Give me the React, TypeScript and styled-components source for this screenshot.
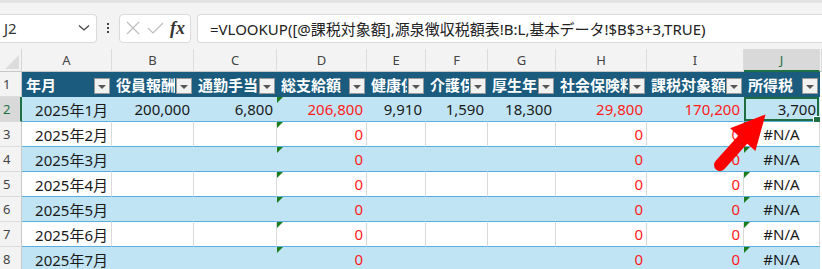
import * as React from 'react';
import styled, { createGlobalStyle, css } from 'styled-components';

const GlobalStyle = createGlobalStyle`
  html, body {
    margin: 0;
    padding: 0;
    background: #ffffff;
  }
  body {
    font-family: 'Noto Sans', 'Noto Sans CJK JP', sans-serif;
  }
  * {
    box-sizing: border-box;
  }
`;

const Page = styled.div`
  position: relative;
  width: 822px;
  height: 269px;
  overflow: hidden;
`;

const FormulaBar = styled.div`
  display: flex;
  align-items: center;
  height: 49px;
  padding: 12px 0 8px 0;
  background: #f3f3f3;
  border-top: 3px solid #e2e2e2;
`;

const Box = styled.div`
  display: flex;
  align-items: center;
  height: 29px;
  background: #ffffff;
  border: 1px solid #dadada;
  border-radius: 4px;
`;

const NameBox = styled(Box)`
  width: 97px;
  border-left: none;
  border-radius: 0 4px 4px 0;
  padding: 0 6px 0 4px;
  justify-content: space-between;
  font-size: 15px;
  color: #333;
`;

const Dots = styled.div`
  width: 22px;
  display: flex;
  flex-direction: column;
  align-items: center;
  gap: 2px;
  span {
    width: 2px;
    height: 2px;
    background: #444;
  }
`;

const FxBox = styled(Box)`
  width: 72px;
  padding: 0 5px 0 6px;
  justify-content: space-between;
`;

const FxText = styled.span`
  font-family: 'Liberation Serif', serif;
  font-style: italic;
  font-weight: bold;
  font-size: 18px;
  color: #333;
`;

const FormulaBox = styled(Box)`
  flex: 1;
  margin-left: 6px;
  border-right: none;
  border-radius: 4px 0 0 4px;
  padding-left: 12px;
  font-size: 15px;
  color: #222;
  white-space: nowrap;
`;

const Sheet = styled.div`
  display: grid;
  grid-template-columns: 22px 90px 82px 83px 90px 59px 62px 68px 91px 97px 76px 2px;
  grid-template-rows: 23px repeat(8, 25px);
  font-family: 'Noto Sans', 'Noto Sans CJK JP', sans-serif;
`;

const Corner = styled.div`
  background: #f3f3f3;
  border-right: 1px solid #d6d6d6;
  border-bottom: 1px solid #c8c8c8;
  position: relative;
  &::after {
    content: '';
    position: absolute;
    right: 2px;
    bottom: 2px;
    border-style: solid;
    border-width: 0 0 14px 14px;
    border-color: transparent transparent #dcdcdc transparent;
  }
`;

const ColHead = styled.div<{ $sel?: boolean }>`
  display: flex;
  align-items: center;
  justify-content: center;
  font-size: 13px;
  color: #444;
  background: #f3f3f3;
  border-right: 1px solid #dcdcdc;
  border-bottom: 1px solid #c8c8c8;
  ${(p) =>
    p.$sel &&
    css`
      background: #d9d9d9;
      color: #1e7145;
      border-bottom: 2px solid #1e7145;
    `}
`;

const RowHead = styled.div<{ $sel?: boolean }>`
  display: flex;
  align-items: center;
  padding-left: 3px;
  font-size: 13px;
  color: #444;
  background: #f3f3f3;
  border-right: 1px solid #c8c8c8;
  border-bottom: 1px solid #dcdcdc;
  ${(p) =>
    p.$sel &&
    css`
      background: #d9d9d9;
      color: #1e7145;
      border-right: 2px solid #1e7145;
    `}
`;

const HeadCell = styled.div`
  display: flex;
  align-items: center;
  gap: 1px;
  padding: 0 2px 0 4px;
  background: #1b5b7d;
  color: #ffffff;
  font-family: 'Noto Sans CJK JP', sans-serif;
  font-weight: bold;
  font-size: 15px;
`;

const HeadText = styled.span`
  flex: 1;
  min-width: 0;
  overflow: hidden;
  white-space: nowrap;
`;

const FilterButton = styled.span`
  position: relative;
  flex: none;
  width: 16px;
  height: 16px;
  margin-top: 2px;
  background: #f2f2f2;
  border: 1px solid #9a9a9a;
  &::after {
    content: '';
    position: absolute;
    left: 3px;
    top: 6px;
    border-style: solid;
    border-width: 4px 4px 0 4px;
    border-color: #555 transparent transparent transparent;
  }
`;

const Filler = styled.div`
  background: #ffffff;
`;

const Cell = styled.div<{ $band: boolean; $red?: boolean; $align: 'right' | 'center'; $tri?: boolean; $sel?: boolean }>`
  position: relative;
  display: flex;
  align-items: center;
  justify-content: ${(p) => (p.$align === 'right' ? 'flex-end' : 'center')};
  padding: 0 3px 0 3px;
  font-size: 15px;
  white-space: nowrap;
  color: ${(p) => (p.$red ? '#ff1a1a' : '#1a1a1a')};
  background: ${(p) => (p.$band ? '#c0e4f4' : '#ffffff')};
  border-bottom: 1px solid #5aaede;
  border-right: 1px solid ${(p) => (p.$band ? '#c0e4f4' : '#dadada')};
  ${(p) =>
    p.$tri &&
    css`
      &::before {
        content: '';
        position: absolute;
        left: 0;
        top: 0;
        border-style: solid;
        border-width: 6px 6px 0 0;
        border-color: #1b7d1b transparent transparent transparent;
      }
    `}
  ${(p) =>
    p.$sel &&
    css`
      box-shadow: inset 0 0 0 2px #1e6e42;
      &::after {
        content: '';
        position: absolute;
        right: -2px;
        bottom: -3px;
        width: 6px;
        height: 6px;
        background: #1e6e42;
        border: 1px solid #fff;
      }
    `}
`;

const Arrow = styled.svg`
  position: absolute;
  left: 0;
  top: 0;
  pointer-events: none;
`;

const letters = ['A', 'B', 'C', 'D', 'E', 'F', 'G', 'H', 'I', 'J'];
const headers = ['年月', '役員報酬', '通勤手当', '総支給額', '健康保険料', '介護保険料', '厚生年金保険料', '社会保険料計', '課税対象額', '所得税'];

type C = { t: string; red?: boolean; align: 'right' | 'center'; tri?: boolean };

const firstRow: C[] = [
  { t: '2025年1月', align: 'right' },
  { t: '200,000', align: 'right' },
  { t: '6,800', align: 'right' },
  { t: '206,800', align: 'right', red: true, tri: true },
  { t: '9,910', align: 'right' },
  { t: '1,590', align: 'right' },
  { t: '18,300', align: 'right' },
  { t: '29,800', align: 'right', red: true },
  { t: '170,200', align: 'right', red: true },
  { t: '3,700', align: 'right' },
];

const emptyRow = (m: number): C[] => [
  { t: `2025年${m}月`, align: 'right' },
  { t: '', align: 'right' },
  { t: '', align: 'right' },
  { t: '0', align: 'right', red: true, tri: true },
  { t: '', align: 'right' },
  { t: '', align: 'right' },
  { t: '', align: 'right' },
  { t: '0', align: 'right', red: true },
  { t: '0', align: 'right', red: true },
  { t: '#N/A', align: 'center', tri: true },
];

const rows: C[][] = [firstRow, ...[2, 3, 4, 5, 6, 7].map(emptyRow)];

const App = () => {
  return (
    <Page>
      <GlobalStyle />
      <FormulaBar>
        <NameBox>
          <span>J2</span>
          <svg width="12" height="8" viewBox="0 0 12 8">
            <path d="M1 1.5 L6 6 L11 1.5" stroke="#444" strokeWidth="1.3" fill="none" />
          </svg>
        </NameBox>
        <Dots>
          <span />
          <span />
          <span />
        </Dots>
        <FxBox>
          <svg width="14" height="14" viewBox="0 0 14 14">
            <path d="M1 1 L13 13 M13 1 L1 13" stroke="#bdbdbd" strokeWidth="1.2" />
          </svg>
          <svg width="17" height="12" viewBox="0 0 17 12">
            <path d="M1 6 L6 11 L16 1" stroke="#bdbdbd" strokeWidth="1.2" fill="none" />
          </svg>
          <FxText>fx</FxText>
        </FxBox>
        <FormulaBox>=VLOOKUP([@課税対象額],源泉徴収税額表!B:L,基本データ!$B$3+3,TRUE)</FormulaBox>
      </FormulaBar>
      <Sheet>
        <Corner />
        {letters.map((l) => (
          <ColHead key={l} $sel={l === 'J'}>
            {l}
          </ColHead>
        ))}
        <ColHead />
        <RowHead>1</RowHead>
        {headers.map((h) => (
          <HeadCell key={h}>
            <HeadText>{h}</HeadText>
            <FilterButton />
          </HeadCell>
        ))}
        <Filler />
        {rows.map((r, i) => (
          <React.Fragment key={i}>
            <RowHead $sel={i === 0}>{i + 2}</RowHead>
            {r.map((c, j) => (
              <Cell
                key={j}
                $band={i % 2 === 0}
                $red={c.red}
                $align={c.align}
                $tri={c.tri && !(i === 0 && j === 9)}
                $sel={i === 0 && j === 9}
              >
                {c.t}
              </Cell>
            ))}
            <Filler />
          </React.Fragment>
        ))}
      </Sheet>
      <Arrow width="822" height="269" viewBox="0 0 822 269">
        <g transform="translate(720 165) rotate(-48)">
          <line x1="0" y1="0" x2="40" y2="0" stroke="#ff0000" strokeWidth="12" strokeLinecap="round" />
          <polygon points="34,-17 68,0 34,17" fill="#ff0000" />
        </g>
      </Arrow>
    </Page>
  );
};

export default App;
